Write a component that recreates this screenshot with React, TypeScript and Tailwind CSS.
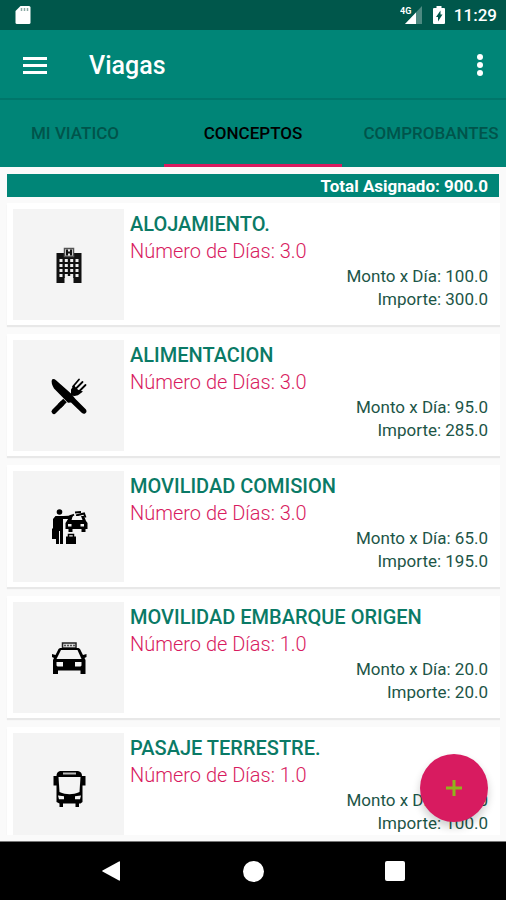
import React from 'react';

interface Concepto {
  nombre: string;
  dias: string;
  monto: string;
  importe: string;
  icon: React.ReactNode;
}

const HotelIcon = () => (
  <svg viewBox="0 0 40 40" className="h-10 w-10" aria-hidden="true">
    <path fill="#111" d="M7.500 8H15V3h10v5h7.500v30h-8v-5l-2-2h-5l-2 2v5h-8z" />
    <path fill="#e8e8e8" stroke="#555" strokeWidth="1.500" d="M15.500 3.500h9v8h-9z" />
    <path stroke="#111" strokeWidth="2" d="M18 4.500v6M22 4.500v6M18 7.500h4" />
    {[14, 19, 24, 29].map((y) =>
      [10.5, 15.8, 21.2, 26.5].map((x) => (
        <rect key={`${x}-${y}`} x={x} y={y} width="3" height="3" fill="#eee" />
      ))
    )}
    <path fill="#f4f4f4" d="M16 38v-5.500l2-1.500h4l2 1.500V38z" />
  </svg>
);

const FoodIcon = () => (
  <svg viewBox="0 0 40 40" className="h-10 w-10" aria-hidden="true">
    <path
      fill="#000"
      d="M3 3.500c1-1 2.500-.8 4 .7L22 17.500l4.500 5.500 10 10c2.800 3-.8 6.500-3.800 3.800L22 26.500l-3 .2L5 12.500C3 9.500 2 5.500 3 3.500z"
    />
    <path stroke="#000" strokeWidth="5" strokeLinecap="round" d="M5 35.500l8-8" />
    <path stroke="#000" strokeWidth="5" d="M10.500 30l5.500-5.500" />
    <path fill="#000" d="M22 13.500l3-4.500 2.500 3.500 2 1.500 4.500 1.500-4 3c-3 2-6 1.500-8 .5z" />
    <path stroke="#000" strokeWidth="1.800" strokeLinecap="round" d="M24 10.500l6-7M26.500 13l7-7M29.500 16l7-7" />
  </svg>
);

const CommissionIcon = () => (
  <svg viewBox="0 0 40 40" className="h-10 w-10" aria-hidden="true">
    <circle cx="10.500" cy="5" r="2.800" fill="#000" />
    <path fill="#000" d="M6.500 9h8l5-.2 3-1.300 1 2-3.500 2.500H14v25h-3V24h-1v13H7V32H3V21.500h1V12z" />
    <path fill="none" stroke="#000" strokeWidth="2" d="M19 15l2.500-5.500L25 7.500M26 5.500l6-.5M27 8.500l8-2 1.500 4" />
    <path fill="#000" d="M18.500 13l3-5h3l-2 5h11l-1.500-4h3l2 5 1.500 2v6h-2v3h-4v-3h-9v3h-4v-3h-3v-6z" />
    <path fill="#f4f4f4" d="M19 17h3.500v2.500H19zM31.500 17H35v2.500h-3.500zM24 9h6l1 3h-8z" />
    <path fill="#000" d="M17 29.500h10V37H17z" />
    <path fill="none" stroke="#000" strokeWidth="1.500" d="M19.500 30v-2.500h5V30" />
  </svg>
);

const TaxiIcon = () => (
  <svg viewBox="0 0 40 40" className="h-10 w-10" aria-hidden="true">
    <rect x="13.500" y="5" width="13.500" height="5" fill="#ddd" stroke="#222" strokeWidth="1.500" />
    <path stroke="#555" strokeWidth="1.500" strokeDasharray="2 1" d="M15 7.500h11" />
    <path fill="#000" d="M11 10h18.500l1.500 1 3 6 3.500-1v3l-2 1 1 2v14h-5v-3.500H9V36H4V22l1-2-2-1v-3l3.500 1 3-6z" />
    <path fill="#f4f4f4" d="M12 12h16.500l4 9h-25z" />
    <path fill="#f4f4f4" d="M7.500 24h6.500v4.500H8.500l-1-1zM32.500 24H26v4.500h5.500l1-1z" />
  </svg>
);

const BusIcon = () => (
  <svg viewBox="0 0 40 40" className="h-10 w-10" aria-hidden="true">
    <path
      fill="#000"
      d="M11 2h18c3 .5 4 2.500 4 5h3.500v9.500h-3V33l-2 1.500H30V38h-3.500v-3.500H14V38h-3.500v-3.500L7.500 33V16.500h-3V7h3c0-2.500 1-4.500 3.500-5z"
    />
    <path fill="#f4f4f4" d="M9.500 8h22l-1 15c-7 3-13 3-20 0z" />
    <rect x="14" y="3.500" width="13" height="2" fill="#bbb" />
    <path fill="#f4f4f4" d="M9 26.500l6 .8v3h-5zM32 26.500l-6 .8v3h5z" />
  </svg>
);

const CONCEPTOS: Concepto[] = [
  { nombre: 'ALOJAMIENTO.', dias: '3.0', monto: '100.0', importe: '300.0', icon: <HotelIcon /> },
  { nombre: 'ALIMENTACION', dias: '3.0', monto: '95.0', importe: '285.0', icon: <FoodIcon /> },
  { nombre: 'MOVILIDAD COMISION', dias: '3.0', monto: '65.0', importe: '195.0', icon: <CommissionIcon /> },
  { nombre: 'MOVILIDAD EMBARQUE ORIGEN', dias: '1.0', monto: '20.0', importe: '20.0', icon: <TaxiIcon /> },
  { nombre: 'PASAJE TERRESTRE.', dias: '1.0', monto: '100.0', importe: '100.0', icon: <BusIcon /> },
];

const TABS = ['MI VIATICO', 'CONCEPTOS', 'COMPROBANTES'];

const StatusBar = () => (
  <div className="flex h-[30px] shrink-0 items-center bg-[#00574b] pl-[15px] pr-[9px] text-white">
    <svg viewBox="0 0 16 20" className="h-5 w-4" aria-hidden="true">
      <path fill="#fff" d="M5.500 1H14q1.500 0 1.500 1.500v15q0 1.500-1.500 1.500H2Q.5 19 .5 17.500V6z" />
      <path stroke="#8aa9a3" strokeWidth="1.500" d="M6.500 3v3M9.500 3v3M12.500 3v3" />
    </svg>
    <div className="ml-auto flex items-center">
      <svg viewBox="0 0 24 20" className="h-5 w-6" aria-hidden="true">
        <path fill="#4d8a81" d="M22 1v18H5z" />
        <path fill="#fff" d="M16 7.500V19H5z" />
        <text x="0" y="9" fill="#fff" fontSize="9" fontWeight="700">4G</text>
      </svg>
      <svg viewBox="0 0 14 20" className="ml-2 h-5 w-[14px]" aria-hidden="true">
        <path fill="#fff" d="M4.500 1h5v2H12q1 0 1 1v14q0 1-1 1H2q-1 0-1-1V4q0-1 1-1h2.500z" />
        <path fill="#00574b" d="M8.500 5.500v4h2L6 16.500v-4.500H4z" />
      </svg>
      <span className="ml-2 text-[17px] font-medium leading-5">11:29</span>
    </div>
  </div>
);

const ConceptoCard: React.FC<{ item: Concepto }> = ({ item }) => (
  <li className="flex h-[122px] shrink-0 bg-white px-[6px] pt-[6px] shadow-[0_2px_1px_rgba(0,0,0,0.07)]">
    <div className="flex h-[111px] w-[111px] shrink-0 items-center justify-center bg-[#f4f4f4]">
      {item.icon}
    </div>
    <div className="min-w-0 flex-1 px-[6px] pt-px">
      <h2 className="text-[20px] font-medium leading-7 text-[#0a7a66]">{item.nombre}</h2>
      <p className="text-[20px] font-light leading-[27px] text-[#d81b60]">Número de Días: {item.dias}</p>
      <p className="text-right text-[17px] leading-[23px] text-[#1d5547]">Monto x Día: {item.monto}</p>
      <p className="text-right text-[17px] leading-[23px] text-[#1d5547]">Importe: {item.importe}</p>
    </div>
  </li>
);

export default function App() {
  return (
    <div className="flex h-screen flex-col overflow-hidden bg-[#fafafa] font-['Roboto',sans-serif]">
      <StatusBar />

      {/* Toolbar */}
      <header className="flex h-[70px] shrink-0 items-center border-b-2 border-[#00766a] bg-[#008577] pl-[23px] pr-[23px] pt-[2px] text-white">
        <button type="button" aria-label="Abrir menú" className="flex h-10 w-6 flex-col justify-center gap-1">
          <span className="h-[3px] w-full bg-white" />
          <span className="h-[3px] w-full bg-white" />
          <span className="h-[3px] w-full bg-white" />
        </button>
        <h1 className="ml-[42px] pt-[2px] text-[25px] font-medium leading-8">Viagas</h1>
        <button type="button" aria-label="Más opciones" className="ml-auto flex h-10 flex-col items-center justify-center gap-[2px]">
          <span className="h-[6px] w-[6px] rounded-full bg-white" />
          <span className="h-[6px] w-[6px] rounded-full bg-white" />
          <span className="h-[6px] w-[6px] rounded-full bg-white" />
        </button>
      </header>

      {/* Tabs */}
      <nav role="tablist" className="flex h-[67px] shrink-0 justify-center bg-[#008577]">
        {TABS.map((tab) => (
          <button
            key={tab}
            type="button"
            role="tab"
            aria-selected={tab === 'CONCEPTOS'}
            className={`w-[178px] shrink-0 border-b-[3px] pt-1 text-[17px] font-medium ${
              tab === 'CONCEPTOS' ? 'border-[#d81b60] text-black' : 'border-transparent text-[#00544b]'
            }`}
          >
            {tab}
          </button>
        ))}
      </nav>

      <main className="relative flex min-h-0 flex-1 flex-col px-[6px] pb-[6px] pt-[7px]">
        <p className="mx-px mb-[6px] h-[23px] shrink-0 bg-[#008577] pr-[11px] text-right text-[17px] font-bold leading-6 text-white">
          Total Asignado: 900.0
        </p>
        <ul className="flex min-h-0 flex-1 flex-col gap-[9px] overflow-hidden pl-px">
          {CONCEPTOS.map((item) => (
            <ConceptoCard key={item.nombre} item={item} />
          ))}
        </ul>
        <button
          type="button"
          aria-label="Agregar concepto"
          className="absolute bottom-[19px] right-[18px] flex h-[68px] w-[68px] items-center justify-center rounded-full bg-[#d81b60] shadow-[0_5px_8px_rgba(0,0,0,0.2)]"
        >
          <svg viewBox="0 0 18 18" className="h-[18px] w-[18px]" aria-hidden="true">
            <path stroke="#8fb51c" strokeWidth="3" d="M9 1v16M1 9h16" />
          </svg>
        </button>
      </main>

      {/* Android navigation */}
      <footer className="flex h-[59px] shrink-0 items-center justify-around border-t border-[#777] bg-black px-[40px]">
        <button type="button" aria-label="Atrás" className="flex h-10 w-10 items-center justify-center">
          <svg viewBox="0 0 20 22" className="h-[22px] w-5" aria-hidden="true">
            <path fill="#fff" d="M18 1.500q1-.5 1 .5v18q0 1-1 .5L1.500 11.500q-.8-.5 0-1z" />
          </svg>
        </button>
        <button type="button" aria-label="Inicio" className="flex h-10 w-10 items-center justify-center">
          <span className="h-[21px] w-[21px] rounded-full bg-white" />
        </button>
        <button type="button" aria-label="Recientes" className="flex h-10 w-10 items-center justify-center">
          <span className="h-5 w-5 rounded-xs bg-white" />
        </button>
      </footer>
    </div>
  );
}
